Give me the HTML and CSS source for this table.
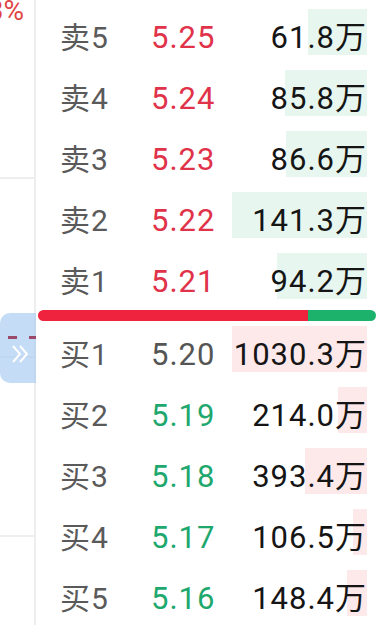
FILE: index.html
```html
<!DOCTYPE html>
<html lang="zh-CN">
<head>
<meta charset="utf-8">
<link rel="stylesheet" href="styles.css">
</head>
<body>
<div class="page">
  <aside class="side">
    <div class="side-sec"><div class="pct">+2.53%</div></div>
    <div class="side-sec"></div>
    <div class="side-sec"></div>
    <div class="handle">
      <div class="dashes"><span class="d1"></span><span class="d2"></span></div>
      <svg class="chev" width="18" height="20" viewBox="0 0 18 20"><path d="M2 2 L9 10 L2 18 M9 2 L16 10 L9 18" fill="none" stroke="#fff" stroke-width="2"/></svg>
    </div>
  </aside>
  <main class="book">
    <div class="rows">
      <div class="row sell"><span class="lbl">卖5</span><span class="px up">5.25</span><span class="vol" style="--w:59px">61.8万</span></div>
      <div class="row sell"><span class="lbl">卖4</span><span class="px up">5.24</span><span class="vol" style="--w:82px">85.8万</span></div>
      <div class="row sell"><span class="lbl">卖3</span><span class="px up">5.23</span><span class="vol" style="--w:81px">86.6万</span></div>
      <div class="row sell"><span class="lbl">卖2</span><span class="px up">5.22</span><span class="vol" style="--w:135px">141.3万</span></div>
      <div class="row sell"><span class="lbl">卖1</span><span class="px up">5.21</span><span class="vol" style="--w:90px">94.2万</span></div>
    </div>
    <div class="ratio"><span class="r-red" style="flex-basis:80%"></span><span class="r-green"></span></div>
    <div class="rows">
      <div class="row buy"><span class="lbl">买1</span><span class="px">5.20</span><span class="vol" style="--w:135px">1030.3万</span></div>
      <div class="row buy"><span class="lbl">买2</span><span class="px down">5.19</span><span class="vol" style="--w:29px">214.0万</span></div>
      <div class="row buy"><span class="lbl">买3</span><span class="px down">5.18</span><span class="vol" style="--w:62px">393.4万</span></div>
      <div class="row buy"><span class="lbl">买4</span><span class="px down">5.17</span><span class="vol" style="--w:14px">106.5万</span></div>
      <div class="row buy"><span class="lbl">买5</span><span class="px down">5.16</span><span class="vol" style="--w:20px">148.4万</span></div>
    </div>
  </main>
</div>
</body>
</html>
```
FILE: styles.css
```css
* { box-sizing: border-box; }
html, body { margin: 0; padding: 0; background: #fff; }
body {
  width: 384px;
  height: 625px;
  overflow: hidden;
  font-family: Roboto, "Noto Sans CJK SC", sans-serif;
}
.page {
  display: flex;
  height: 625px;
}
.side {
  position: relative;
  width: 36px;
  flex: none;
  border-right: 2px solid #eeeeee;
  display: flex;
  flex-direction: column;
}
.side-sec {
  height: 179px;
  flex: none;
  border-bottom: 2px solid #eeeeee;
  overflow: hidden;
  display: flex;
  justify-content: flex-end;
  align-items: flex-start;
}
.pct {
  white-space: nowrap;
  color: #e04545;
  font-size: 28px;
  line-height: 30px;
  margin-top: -4px;
  margin-right: 10px;
}
.handle {
  position: absolute;
  left: 0;
  top: 313px;
  width: 36px;
  height: 70px;
  border-radius: 10px 0 0 10px;
  background: rgba(168, 204, 240, 0.68);
  display: flex;
  flex-direction: column;
  align-items: center;
}
.dashes {
  align-self: stretch;
  display: flex;
  margin-top: 23px;
  height: 3px;
}
.d1 { margin-left: 8px; width: 9px; background: #9a4a68; }
.d2 { margin-left: 12px; width: 7px; background: #9a4a68; }
.chev { margin-top: 5px; margin-left: 4px; }

.book {
  flex: 1;
  display: flex;
  flex-direction: column;
  padding: 9px 17px 0 0;
}
.rows {
  display: flex;
  flex-direction: column;
  gap: 15px;
}
.row {
  height: 46px;
  display: grid;
  grid-template-columns: 91px 80px 1fr;
  padding-left: 24px;
  align-items: start;
}
.row > span {
  line-height: 30px;
  padding-top: 14px;
  white-space: nowrap;
  font-size: 31px;
  letter-spacing: 1px;
}
.lbl {
  color: #5a5a5a;
  font-size: 30px !important;
}
.px {
  color: #555;
}
.px.up { color: #e0334a; }
.px.down { color: #1ea86d; }
.vol {
  color: #151515;
  text-align: right;
  padding-right: 0;
  height: 46px;
  background-repeat: no-repeat;
  background-position: right top;
  background-size: var(--w) 100%;
}
.sell .vol { background-image: linear-gradient(#e7f6ee, #e7f6ee); }
.buy .vol { background-image: linear-gradient(#fde8ea, #fde8ea); }

.ratio {
  display: flex;
  height: 11px;
  margin: 11px -9px 5px 2px;
  border-radius: 6px;
  overflow: hidden;
}
.r-red { background: #f0233f; flex-shrink: 0; }
.r-green { flex: 1; background: #1cb26c; }
```
